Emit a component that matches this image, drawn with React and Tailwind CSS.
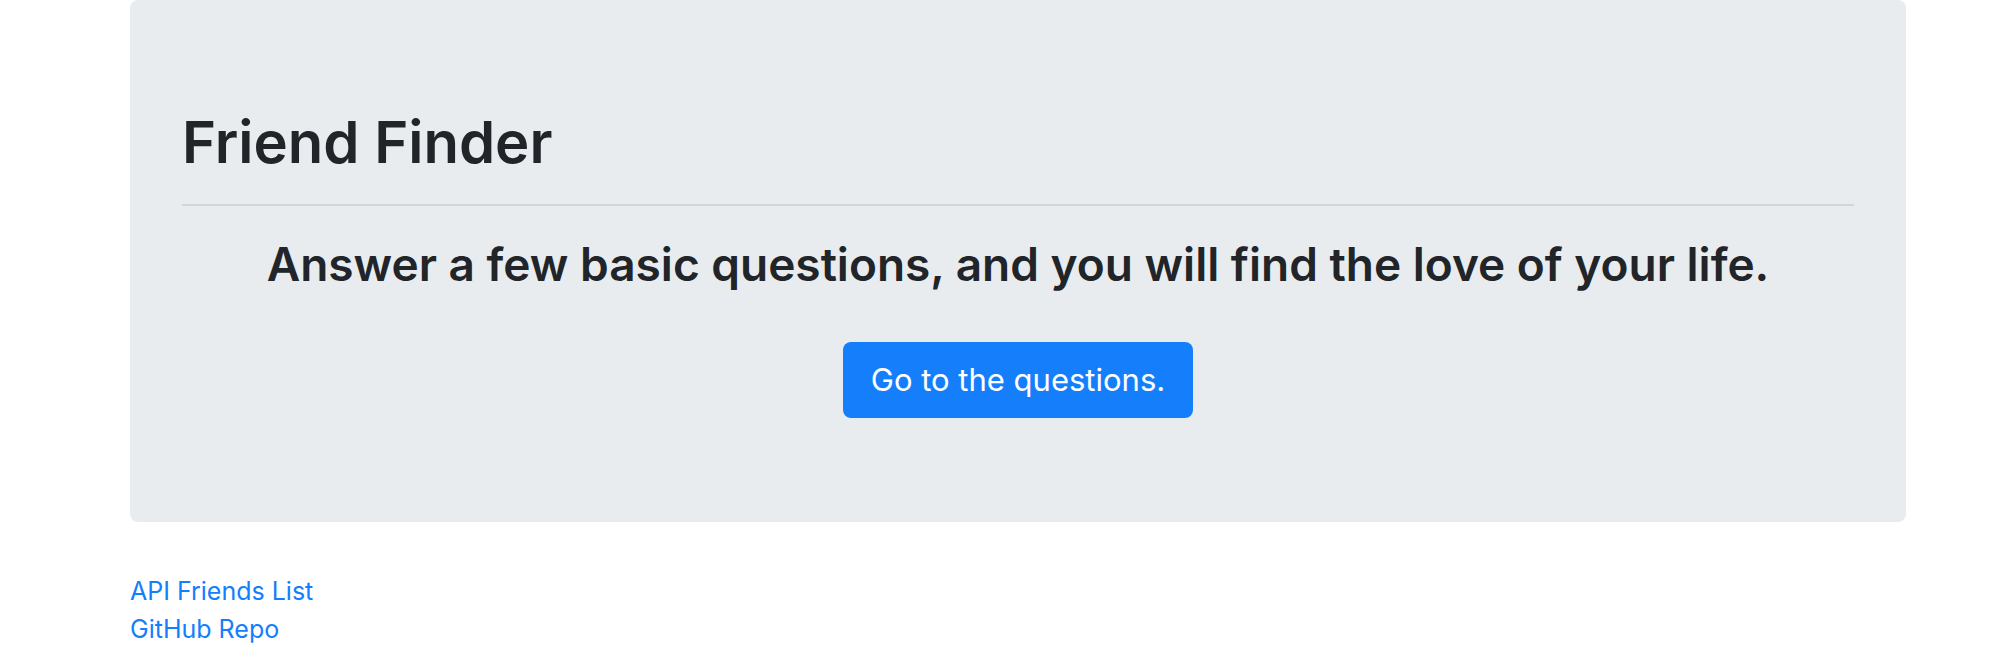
export default function App() {
  return (
    <main className="min-h-screen bg-white pl-[130px] pr-[102px] font-['Inter',sans-serif] text-[#212529]">
      <section className="rounded-lg bg-[#e8ecef] px-[52px] py-[104px]">
        <h1 className="text-[58px] font-semibold leading-[76px]">Friend Finder</h1>
        <hr className="mb-[30px] mt-6 border-t-2 border-[#d1d5d8]" />
        <h2 className="text-center text-[46px] font-semibold leading-[56px]">
          Answer a few basic questions, and you will find the love of your life.
        </h2>
        <div className="mt-[50px] flex justify-center">
          <a href="#survey" className="rounded-lg bg-[#147efb] px-7 py-4 text-[31px] leading-[44px] text-white">
            Go to the questions.
          </a>
        </div>
      </section>
      <nav className="flex flex-col items-start pt-[50px] text-[25px] leading-[38px] text-[#147efb]">
        <a href="#api">API Friends List</a>
        <a href="#github">GitHub Repo</a>
      </nav>
    </main>
  );
}
